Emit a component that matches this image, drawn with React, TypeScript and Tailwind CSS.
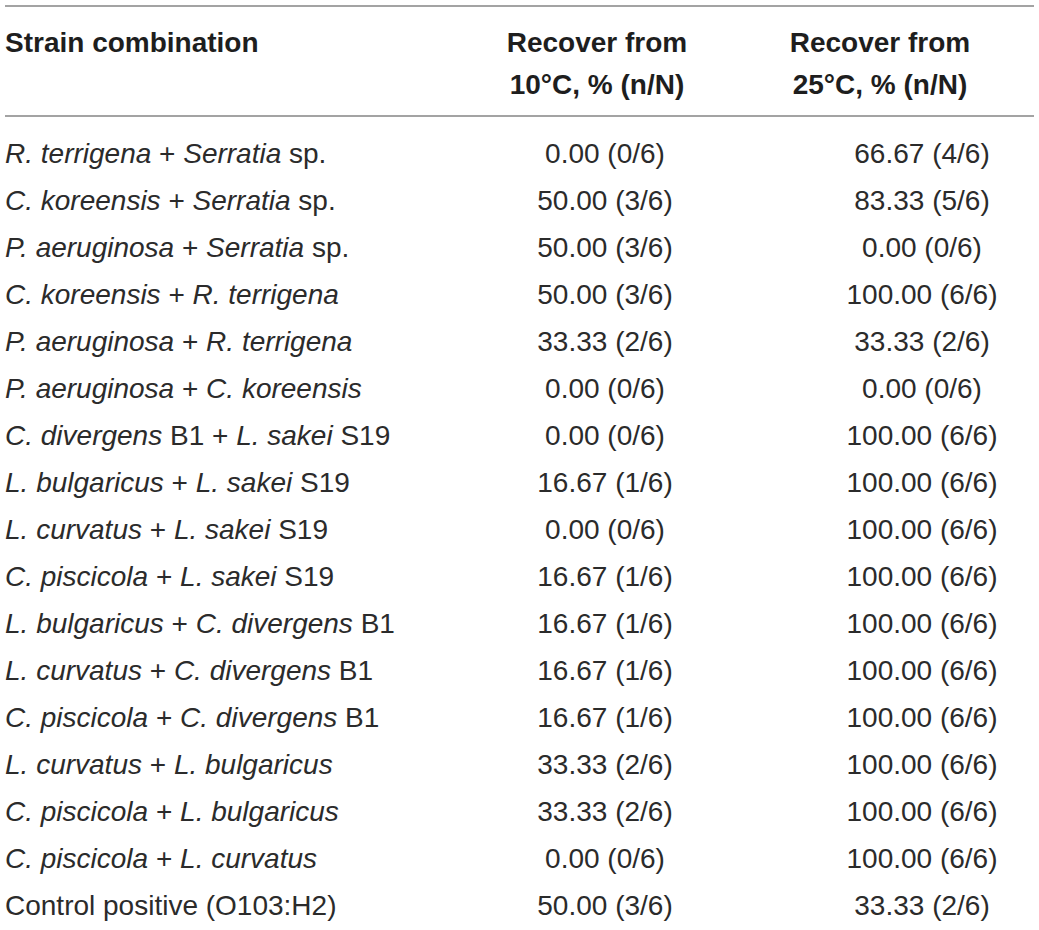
const rows: { name: React.ReactNode; a: string; b: string }[] = [
  { name: <><i>R. terrigena</i> + <i>Serratia</i> sp.</>, a: "0.00 (0/6)", b: "66.67 (4/6)" },
  { name: <><i>C. koreensis</i> + <i>Serratia</i> sp.</>, a: "50.00 (3/6)", b: "83.33 (5/6)" },
  { name: <><i>P. aeruginosa</i> + <i>Serratia</i> sp.</>, a: "50.00 (3/6)", b: "0.00 (0/6)" },
  { name: <><i>C. koreensis</i> + <i>R. terrigena</i></>, a: "50.00 (3/6)", b: "100.00 (6/6)" },
  { name: <><i>P. aeruginosa</i> + <i>R. terrigena</i></>, a: "33.33 (2/6)", b: "33.33 (2/6)" },
  { name: <><i>P. aeruginosa</i> + <i>C. koreensis</i></>, a: "0.00 (0/6)", b: "0.00 (0/6)" },
  { name: <><i>C. divergens</i> B1 + <i>L. sakei</i> S19</>, a: "0.00 (0/6)", b: "100.00 (6/6)" },
  { name: <><i>L. bulgaricus</i> + <i>L. sakei</i> S19</>, a: "16.67 (1/6)", b: "100.00 (6/6)" },
  { name: <><i>L. curvatus</i> + <i>L. sakei</i> S19</>, a: "0.00 (0/6)", b: "100.00 (6/6)" },
  { name: <><i>C. piscicola</i> + <i>L. sakei</i> S19</>, a: "16.67 (1/6)", b: "100.00 (6/6)" },
  { name: <><i>L. bulgaricus</i> + <i>C. divergens</i> B1</>, a: "16.67 (1/6)", b: "100.00 (6/6)" },
  { name: <><i>L. curvatus</i> + <i>C. divergens</i> B1</>, a: "16.67 (1/6)", b: "100.00 (6/6)" },
  { name: <><i>C. piscicola</i> + <i>C. divergens</i> B1</>, a: "16.67 (1/6)", b: "100.00 (6/6)" },
  { name: <><i>L. curvatus</i> + <i>L. bulgaricus</i></>, a: "33.33 (2/6)", b: "100.00 (6/6)" },
  { name: <><i>C. piscicola</i> + <i>L. bulgaricus</i></>, a: "33.33 (2/6)", b: "100.00 (6/6)" },
  { name: <><i>C. piscicola</i> + <i>L. curvatus</i></>, a: "0.00 (0/6)", b: "100.00 (6/6)" },
  { name: <>Control positive (O103:H2)</>, a: "50.00 (3/6)", b: "33.33 (2/6)" },
];

export default function App() {
  return (
    <div className="w-[1039px] h-[930px] bg-white overflow-hidden pt-[5px] px-[5px] font-['Liberation_Sans',Arial,sans-serif] text-[28px] text-[#2b2b2b]">
      <div className="h-[2px] bg-[#a3a3a3]" />

      {/* header */}
      <div className="grid grid-cols-[475px_234px_1fr] pt-[15px] pb-[9px] leading-[42px] font-bold text-[#1e1e1e]">
        <div>Strain combination</div>
        <div className="text-center">
          Recover from
          <br />
          10°C, % (n/N)
        </div>
        <div className="text-center pl-[12px]">
          Recover from
          <br />
          25°C, % (n/N)
        </div>
      </div>

      <div className="h-[2px] bg-[#a3a3a3]" />

      {/* body */}
      <div className="pt-[13px]">
        {rows.map((r, i) => (
          <div key={i} className="grid grid-cols-[475px_250px_1fr] leading-[47px] h-[47px]">
            <div className="whitespace-nowrap">{r.name}</div>
            <div className="text-center">{r.a}</div>
            <div className="text-center pl-[80px]">{r.b}</div>
          </div>
        ))}
      </div>
    </div>
  );
}
